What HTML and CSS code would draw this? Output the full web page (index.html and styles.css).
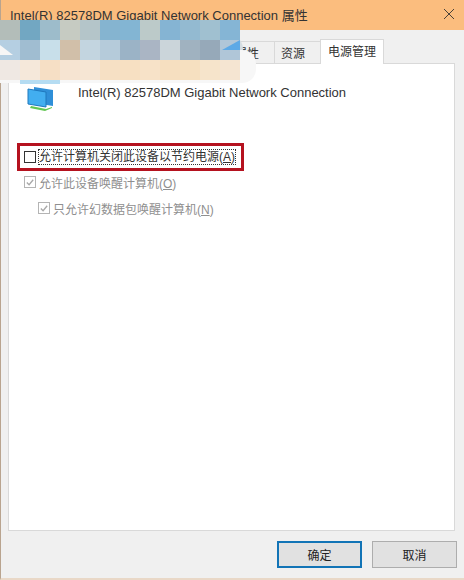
FILE: index.html
```html
<!DOCTYPE html>
<html lang="zh">
<head>
<meta charset="utf-8">
<title>属性</title>
<link rel="stylesheet" href="styles.css">
</head>
<body>
<div class="window">
  <header class="titlebar">
    <span class="title">Intel(R) 82578DM Gigabit Network Connection 属性</span>
    <svg class="close" width="12" height="12" viewBox="0 0 12 12"><path d="M1 1L11 11M11 1L1 11" stroke="#4a4238" stroke-width="1" fill="none"/></svg>
  </header>
  <nav class="tabs">
    <span class="tab tab-hidden">属性</span>
    <span class="tab">资源</span>
    <span class="tab tab-active">电源管理</span>
  </nav>
  <main class="panel">
    <div class="device">
      <svg class="device-icon" width="27" height="24" viewBox="0 0 27 24">
        <path d="M7 0L26 3V19L7 16Z" fill="#2f8fd8"/>
        <path d="M1 2L19 5V20L1 17Z" fill="#42aef0" stroke="#1f78bd" stroke-width="1"/>
        <path d="M4 19L19 22L25 20L25 21L18 24L3 21Z" fill="#62c653"/>
      </svg>
      <span class="device-name">Intel(R) 82578DM Gigabit Network Connection</span>
    </div>
    <div class="highlight">
      <span class="check"></span>
      <span class="focus-label">允许计算机关闭此设备以节约电源(<u>A</u>)</span>
    </div>
    <div class="option">
      <span class="check check-off"><svg width="11" height="11" viewBox="0 0 11 11"><path d="M2 5.5L4.5 8L9 2.5" stroke="#a8a8a8" stroke-width="1.4" fill="none"/></svg></span>
      <span>允许此设备唤醒计算机(<u>O</u>)</span>
    </div>
    <div class="option option-sub">
      <span class="check check-off"><svg width="11" height="11" viewBox="0 0 11 11"><path d="M2 5.5L4.5 8L9 2.5" stroke="#a8a8a8" stroke-width="1.4" fill="none"/></svg></span>
      <span>只允许幻数据包唤醒计算机(<u>N</u>)</span>
    </div>
  </main>
  <footer class="actions">
    <button class="btn btn-default">确定</button>
    <button class="btn">取消</button>
  </footer>
</div>
<div class="mosaic-edge"></div>
<div class="mosaic-blue"></div>
<div class="mosaic">
  <i class="a1"></i><i class="a2"></i><i class="a3"></i><i class="a4"></i><i class="a5"></i><i class="a6"></i><i class="a7"></i><i class="a8"></i><i class="a9"></i><i class="a10"></i><i class="a11"></i><i class="a12"></i>
  <i class="b1"></i><i class="b2"></i><i class="b3"></i><i class="b4"></i><i class="b5"></i><i class="b6"></i><i class="b7"></i><i class="b8"></i><i class="b9"></i><i class="b10"></i><i class="b11"></i><i class="b12"></i>
  <i class="c1"></i><i class="c2"></i><i class="c3"></i><i class="c4"></i><i class="c5"></i><i class="c6"></i><i class="c7"></i><i class="c8"></i><i class="c9"></i><i class="c10"></i><i class="c11"></i><i class="c12"></i>
</div>
<svg class="mosaic-shards" width="256" height="40" viewBox="0 0 256 40">
  <path d="M0 5L13 15H0Z" fill="#f6f6f6"/>
  <path d="M222 10L240 0V10Z" fill="#5da9e6"/>
  <path d="M240 0Q243 4 243 10H240Z" fill="#d5dde2"/>
</svg>
</body>
</html>
```
FILE: styles.css
```css
* { box-sizing: border-box; }
html, body { margin: 0; padding: 0; }
body {
  width: 464px;
  height: 580px;
  overflow: hidden;
  position: relative;
  font-family: "Liberation Sans", "Noto Sans CJK SC", sans-serif;
  font-size: 12px;
  color: #222;
}
.window {
  width: 464px;
  height: 580px;
  display: flex;
  flex-direction: column;
  background: #f0f0f0;
  border-left: 1px solid #b9a48f;
  border-bottom: 2px solid #e9d8c7;
}
.titlebar {
  height: 30px;
  flex: none;
  display: flex;
  align-items: center;
  justify-content: space-between;
  padding: 0 9px 2px 9px;
  background: #fbbd7e;
}
.title { font-size: 13px; color: #333; white-space: nowrap; }
.tabs {
  height: 33px;
  flex: none;
  display: flex;
  align-items: flex-end;
  padding-left: 228px;
}
.tab {
  height: 22px;
  width: 47px;
  display: flex;
  align-items: center;
  justify-content: center;
  background: #f0f0f0;
  border: 1px solid #d9d9d9;
  border-bottom: 0;
  margin-left: -1px;
  padding-right: 9px;
  font-size: 12px;
  color: #333;
}
.tab-active {
  width: 64px;
  height: 25px;
  background: #fff;
  margin-bottom: -1px;
  position: relative;
  z-index: 1;
  padding: 0 0 3px;
}
.panel {
  flex: none;
  width: 447px;
  height: 468px;
  margin-left: 7px;
  background: #fff;
  border: 1px solid #d9d9d9;
  padding: 15px 0 0 8px;
}
.device {
  display: flex;
  align-items: flex-start;
  height: 32px;
  padding-left: 10px;
}
.device-icon { flex: none; margin-top: 8px; }
.device-name { margin-left: 24px; margin-top: 6px; font-size: 13px; color: #333; white-space: nowrap; }
.highlight {
  width: 227px;
  height: 28px;
  margin-top: 32px;
  border: 3px solid #b5121f;
  display: flex;
  align-items: center;
  padding-left: 4px;
}
.check {
  flex: none;
  width: 12px;
  height: 12px;
  border: 1px solid #333;
  background: #fff;
  display: flex;
  align-items: center;
  justify-content: center;
}
.check-off { border-color: #b4b4b4; }
.focus-label {
  margin-left: 2px;
  height: 16px;
  line-height: 15px;
  border: 1px dotted #333;
  white-space: nowrap;
  color: #333;
  font-size: 12px;
}
.option {
  display: flex;
  align-items: center;
  gap: 3px;
  margin-top: 1px;
  height: 20px;
  padding-left: 7px;
  color: #8f8f8f;
  font-size: 12px;
  white-space: nowrap;
}
.option-sub { margin-top: 6px; padding-left: 21px; }
.actions {
  flex: none;
  display: flex;
  justify-content: flex-end;
  gap: 10px;
  padding: 10px 7px 0 0;
}
.btn {
  width: 85px;
  height: 27px;
  background: #e1e1e1;
  border: 1px solid #adadad;
  font-family: inherit;
  font-size: 12px;
  color: #222;
  padding: 0;
}
.btn-default { border: 2px solid #1274b6; }
.mosaic {
  position: absolute;
  left: 0;
  top: 20px;
  width: 240px;
  height: 60px;
  display: grid;
  grid-template-columns: repeat(12, 20px);
  grid-auto-rows: 20px;
}
.a1 { background: #b3bdb9; } .a2 { background: #72a7c2; } .a3 { background: #9dbccb; } .a4 { background: #c6cbc2; }
.a5 { background: #b4c5c9; } .a6 { background: #85b4d0; } .a7 { background: #83b5d3; } .a8 { background: #bccac9; }
.a9 { background: #85b4d3; } .a10 { background: #93bad1; } .a11 { background: #a0c0d0; } .a12 { background: #85b5d5; }
.b1 { background: #b5cfe2; } .b2 { background: #a0bdd1; } .b3 { background: #c8dfea; } .b4 { background: #d1bfa9; }
.b5 { background: #c3d5e0; } .b6 { background: #b5cbda; } .b7 { background: #9bb3c6; } .b8 { background: #aab5c4; }
.b9 { background: #cbd5da; } .b10 { background: #a0b2c0; } .b11 { background: #96a9b9; } .b12 { background: #b0c6d8; }
.c1 { background: #efe8e3; } .c2 { background: #f5e8da; } .c3 { background: #f6dfc5; } .c4 { background: #f6e4d2; }
.c5 { background: #f6e6d4; } .c6 { background: #f6e0c4; } .c7 { background: #f7e0c2; } .c8 { background: #f7e2c8; }
.c9 { background: #f6dfc0; } .c10 { background: #f6e0c0; } .c11 { background: #f6e4cb; } .c12 { background: #f5e5d2; }
.mosaic-edge {
  position: absolute;
  left: 0;
  top: 50px;
  width: 256px;
  height: 33px;
  background: #f7f7f7;
  border-radius: 0 14px 14px 0;
}
.mosaic-blue {
  position: absolute;
  left: 20px;
  top: 80px;
  width: 40px;
  height: 4px;
  background: #b5dcf2;
}
.mosaic-shards {
  position: absolute;
  left: 0;
  top: 40px;
}
```
